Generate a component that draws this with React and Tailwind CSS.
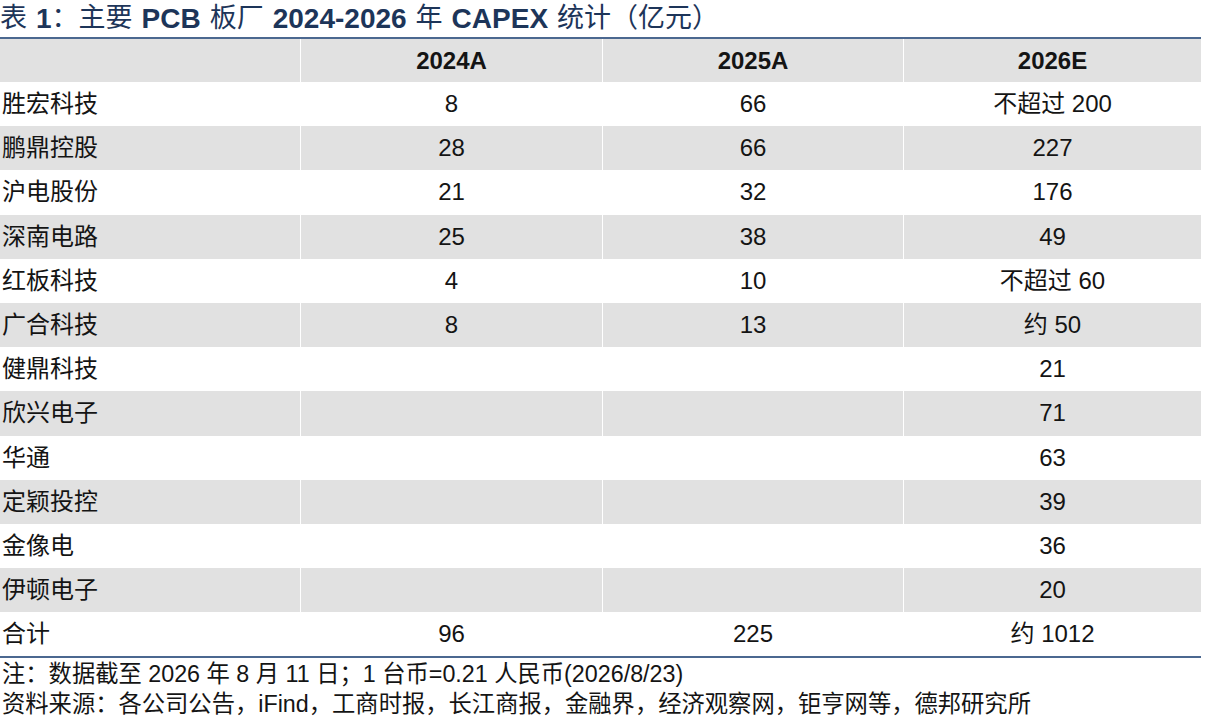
import React from 'react';

const rows = [
  ['胜宏科技', '8', '66', '不超过 200'],
  ['鹏鼎控股', '28', '66', '227'],
  ['沪电股份', '21', '32', '176'],
  ['深南电路', '25', '38', '49'],
  ['红板科技', '4', '10', '不超过 60'],
  ['广合科技', '8', '13', '约 50'],
  ['健鼎科技', '', '', '21'],
  ['欣兴电子', '', '', '71'],
  ['华通', '', '', '63'],
  ['定颖投控', '', '', '39'],
  ['金像电', '', '', '36'],
  ['伊顿电子', '', '', '20'],
  ['合计', '96', '225', '约 1012'],
];

const font = { fontFamily: "'Liberation Sans', 'Noto Sans CJK SC', sans-serif" };

export default function App() {
  return (
    <div className="w-[1212px] h-[721px] bg-white text-[#141414] overflow-hidden" style={font}>
      <div className="w-[1201px]">
        {/* title */}
        <div className="h-[37px] flex items-center text-[27px] text-[#1d3559] leading-none whitespace-nowrap">
          表<b className="ml-[9px] text-[28px]">1</b>：主要<b className="mx-[9px] text-[28px]">PCB</b>板厂<b className="mx-[9px] text-[28px]">2024-2026</b>年<b className="mx-[9px] text-[28px]">CAPEX</b>统计（亿元）
        </div>
        <div className="h-[2px] bg-[#4b6890]" />

        {/* header */}
        <div className="grid grid-cols-[300px_302px_301px_298px] h-[43px] bg-[#e1e1e1] text-[24px] font-bold">
          <div />
          <div className="flex items-center justify-center border-l border-white">2024A</div>
          <div className="flex items-center justify-center border-l border-white">2025A</div>
          <div className="flex items-center justify-center border-l border-white">2026E</div>
        </div>

        {rows.map((r, i) => (
          <div
            key={r[0]}
            className={`grid grid-cols-[300px_302px_301px_298px] h-[44.2px] text-[24px] ${i % 2 === 1 ? 'bg-[#e1e1e1]' : 'bg-white'}`}
          >
            <div className="flex items-center pl-[2px]">{r[0]}</div>
            <div className="flex items-center justify-center border-l border-white">{r[1]}</div>
            <div className="flex items-center justify-center border-l border-white">{r[2]}</div>
            <div className="flex items-center justify-center border-l border-white">{r[3]}</div>
          </div>
        ))}

        <div className="h-[2px] bg-[#4b6890]" />

        {/* notes */}
        <div className="text-[23.3px] leading-[30px] pt-[1px] pl-[2px] whitespace-nowrap">
          <div>注：数据截至 2026 年 8 月 11 日；1 台币=0.21 人民币(2026/8/23)</div>
          <div>资料来源：各公司公告，iFind，工商时报，长江商报，金融界，经济观察网，钜亨网等，德邦研究所</div>
        </div>
      </div>
    </div>
  );
}
